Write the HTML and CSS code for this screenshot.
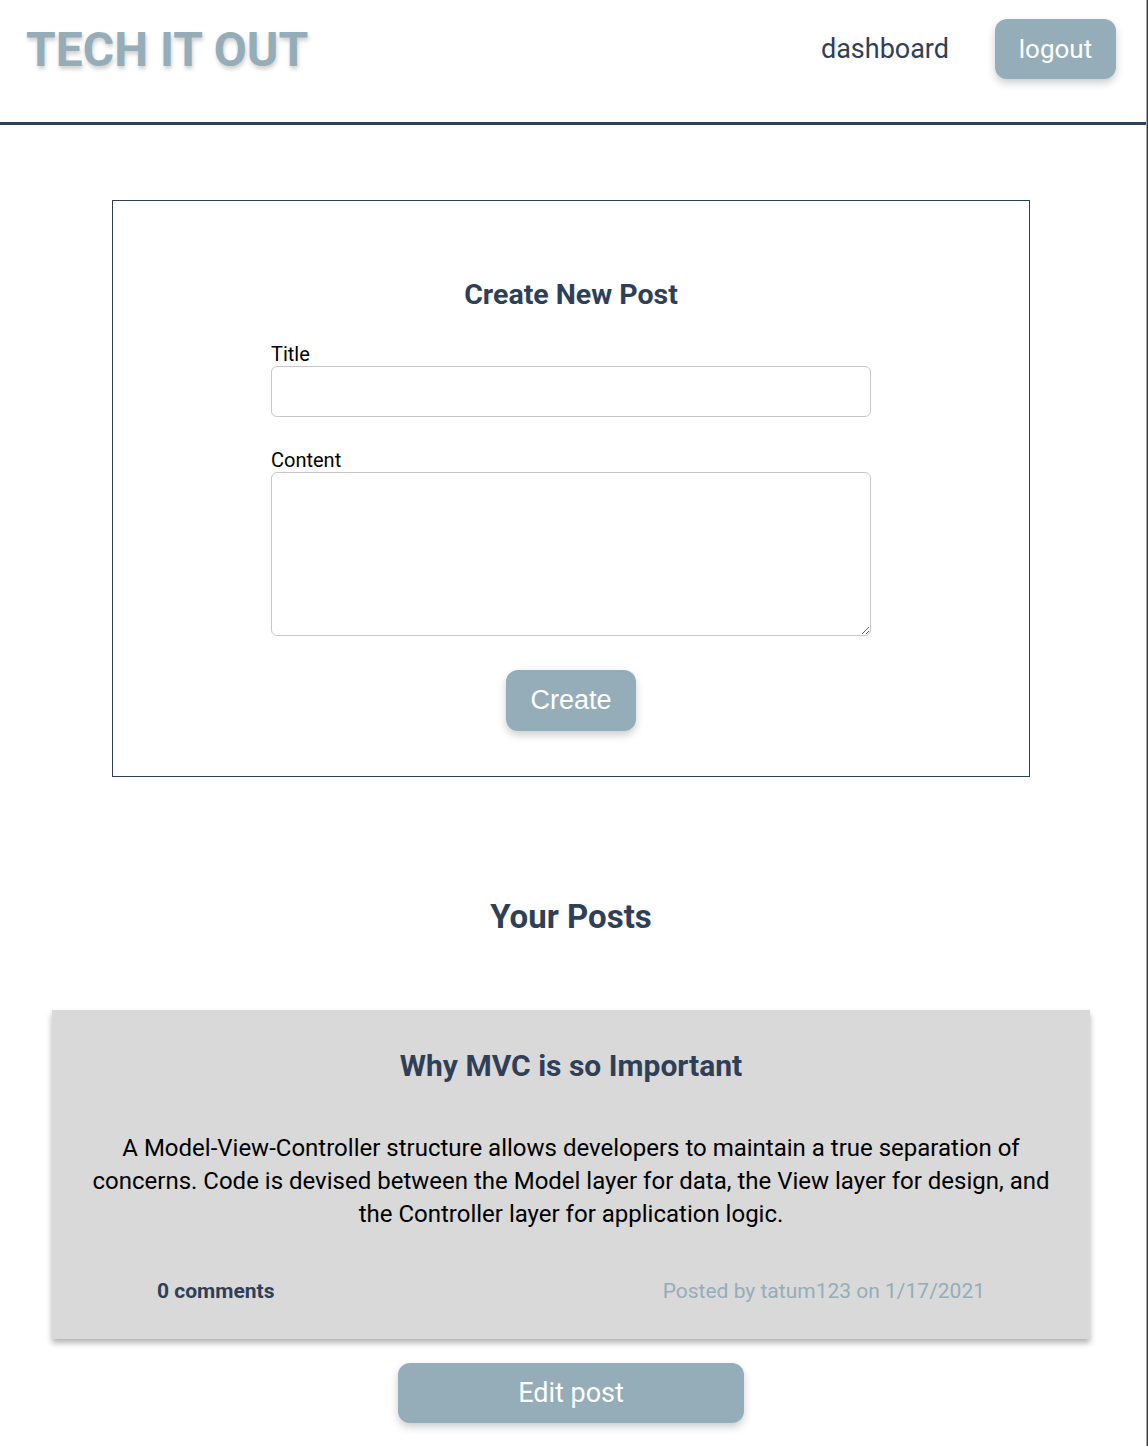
FILE: index.html
```html
<!DOCTYPE html>
<html lang="en">
<head>
  <meta charset="UTF-8" />
  <meta name="viewport" content="width=device-width, initial-scale=1.0" />
  <title>Tech It Out - Dashboard</title>
  <link rel="stylesheet" href="styles.css">
</head>
<body>
  <div class="page">

    <!-- Header -->
    <header class="site-header">
      <h1 class="logo">TECH IT OUT</h1>
      <nav class="site-nav">
        <a href="#" class="nav-link">dashboard</a>
        <button class="btn btn-logout">logout</button>
      </nav>
    </header>

    <main class="content">
      <!-- New post form -->
      <section class="new-post">
        <form class="post-form">
          <h2 class="form-title">Create New Post</h2>
          <label for="post-title">Title</label>
          <input type="text" id="post-title" class="field field-title">
          <label for="post-content">Content</label>
          <textarea id="post-content" class="field field-content"></textarea>
          <button type="submit" class="btn btn-create">Create</button>
        </form>
      </section>

      <!-- Posts list -->
      <section class="posts">
        <h2 class="posts-title">Your Posts</h2>
        <article class="post-card">
          <h3 class="post-title">Why MVC is so Important</h3>
          <p class="post-body">A Model-View-Controller structure allows developers to maintain a true separation of concerns. Code is devised between the Model layer for data, the View layer for design, and the Controller layer for application logic.</p>
          <div class="post-meta">
            <span class="post-comments">0 comments</span>
            <span class="post-author">Posted by tatum123 on 1/17/2021</span>
          </div>
        </article>
        <button class="btn btn-edit">Edit post</button>
      </section>
    </main>

  </div>
</body>
</html>
```

FILE: styles.css
```css
* {
  margin: 0;
  padding: 0;
  box-sizing: border-box;
}
html {
  background: #3a3a3a;
}
body {
  font-family: Roboto, "Liberation Sans", sans-serif;
  color: #000;
}
.page {
  width: 1147px;
  min-height: 100vh;
  background: #fff;
  border-right: 1px solid #a3a3a3;
}
/* Header */
.site-header {
  display: flex;
  justify-content: space-between;
  align-items: center;
  height: 125px;
  padding: 0 30px 24px 26px;
  border-bottom: 3px solid #2e3f57;
}
.logo {
  font-size: 48px;
  font-weight: 700;
  color: #94adb9;
  text-shadow: 1px 3px 4px rgba(0, 0, 0, 0.2);
}
.site-nav {
  display: flex;
  align-items: center;
  gap: 46px;
}
.nav-link {
  font-size: 27px;
  color: #2e3f57;
  text-decoration: none;
}
.btn {
  background: #94adb9;
  color: #fff;
  border: none;
  border-radius: 12px;
  font-family: Roboto, "Liberation Sans", sans-serif;
  font-size: 27px;
  box-shadow: 0 4px 8px rgba(0, 0, 0, 0.2);
  cursor: pointer;
}
.btn-logout {
  width: 121px;
  height: 60px;
  font-size: 26px;
}
/* Main */
.content {
  width: 1142px;
}
.new-post {
  width: 918px;
  margin: 75px auto 0;
  border: 1px solid #2e3f57;
  padding: 77px 0 45px;
}
.post-form {
  width: 600px;
  margin: 0 auto;
  display: flex;
  flex-direction: column;
}
.form-title {
  font-size: 28.5px;
  font-weight: 700;
  color: #2e3f57;
  text-align: center;
  margin-bottom: 31px;
}
.post-form label {
  font-size: 20px;
}
.field {
  width: 600px;
  border: 1px solid #c8c8c8;
  border-radius: 6px;
  font-family: Roboto, sans-serif;
  font-size: 18px;
}
.field-title {
  height: 51px;
  margin-bottom: 31px;
}
.field-content {
  height: 164px;
  margin-bottom: 34px;
}
.btn-create {
  align-self: center;
  width: 130px;
  height: 61px;
  font-family: "Liberation Sans", Arial, sans-serif;
}
/* Posts */
.posts {
  display: flex;
  flex-direction: column;
  align-items: center;
  padding-bottom: 30px;
}
.posts-title {
  font-size: 33px;
  font-weight: 700;
  color: #2e3f57;
  margin-top: 120px;
  margin-bottom: 74px;
}
.post-card {
  width: 1038px;
  background: #d9d9d9;
  padding: 38px 38px 36px;
  box-shadow: 0 4px 6px rgba(0, 0, 0, 0.3);
  text-align: center;
}
.post-title {
  font-size: 30px;
  font-weight: 700;
  color: #2e3f57;
  margin-bottom: 49px;
}
.post-body {
  font-size: 24px;
  line-height: 33px;
  margin-bottom: 48px;
}
.post-meta {
  display: flex;
  justify-content: space-between;
  padding: 0 67px;
  font-size: 21px;
}
.post-comments {
  font-weight: 700;
  color: #2e3f57;
}
.post-author {
  color: #94adb9;
}
.btn-edit {
  width: 346px;
  height: 60px;
  margin-top: 24px;
}
```
